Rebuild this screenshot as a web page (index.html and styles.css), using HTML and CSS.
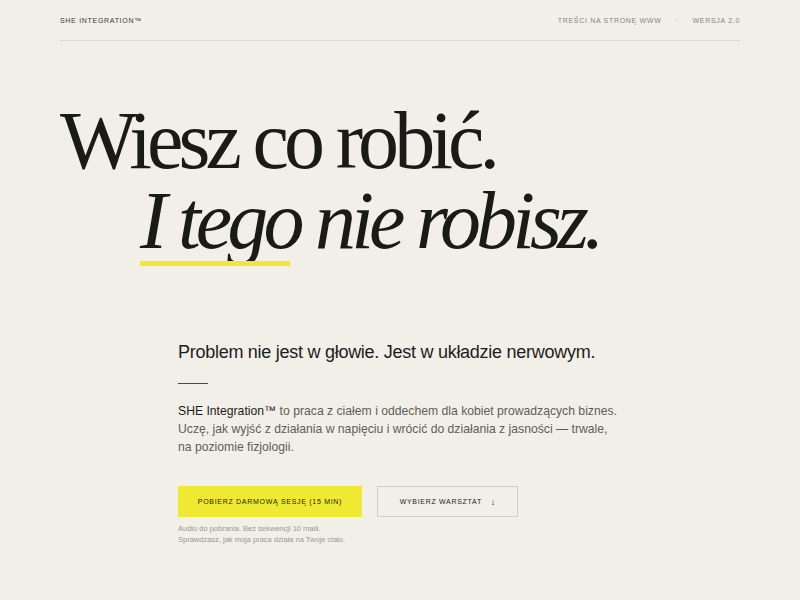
FILE: index.html
```html
<!DOCTYPE html>
<html lang="pl">
<head>
<meta charset="UTF-8" />
<meta name="viewport" content="width=device-width, initial-scale=1" />
<title>SHE Integration™</title>
<link rel="stylesheet" href="styles.css">
</head>
<body>
  <div class="page">
    <header class="topbar">
      <span class="brand">SHE Integration™</span>
      <nav class="meta">
        <span>Treści na stronę www</span>
        <span class="dot">·</span>
        <span>Wersja 2.0</span>
      </nav>
    </header>

    <h1 class="headline">
      <span class="line">Wiesz co robić.</span>
      <span class="line second"><em><span class="mark">I tego</span> nie robisz.</em></span>
    </h1>

    <section class="intro">
      <p class="lead">Problem nie jest w głowie. Jest w układzie nerwowym.</p>
      <hr class="rule" />
      <p class="text"><strong>SHE Integration™</strong> to praca z ciałem i oddechem dla kobiet prowadzących biznes. Uczę, jak wyjść z działania w napięciu i wrócić do działania z jasności — trwale, na poziomie fizjologii.</p>

      <div class="actions">
        <a class="btn primary" href="#">Pobierz darmową sesję (15 min)</a>
        <a class="btn outline" href="#">Wybierz warsztat <span class="arrow">↓</span></a>
      </div>
      <p class="note">Audio do pobrania. Bez sekwencji 10 maili.<br>Sprawdzasz, jak moja praca działa na Twoje ciało.</p>
    </section>
  </div>
</body>
</html>
```

FILE: styles.css
```css
* {
  box-sizing: border-box;
}
html, body {
  margin: 0;
  background: #f2efe8;
}
body {
  font-family: "Liberation Sans", Arial, sans-serif;
  color: #1c1c1a;
}
.page {
  padding: 0 60px;
}
.topbar {
  display: flex;
  justify-content: space-between;
  align-items: center;
  height: 41px;
  border-bottom: 1px solid #dedad2;
  font-size: 7px;
  letter-spacing: 0.1em;
  text-transform: uppercase;
}
.brand {
  color: #3a3936;
}
.meta {
  display: flex;
  gap: 14px;
  color: #86847f;
}
.headline {
  margin: 60px 0 0;
  font-family: "Liberation Serif", "Times New Roman", serif;
  font-weight: normal;
  font-size: 82px;
  line-height: 80px;
  letter-spacing: -0.06em;
  color: #1a1a17;
}
.line {
  display: block;
}
.second {
  padding-left: 80px;
}
.mark {
  display: inline-block;
  position: relative;
}
.mark::after {
  content: "";
  position: absolute;
  left: 0;
  right: 9px;
  bottom: -5px;
  height: 5px;
  background: #efe73a;
}
.intro {
  margin: 81px 0 0 118px;
  width: 440px;
}
.lead {
  margin: 0;
  font-size: 18px;
  letter-spacing: -0.015em;
  color: #1d1d1b;
}
.rule {
  width: 30px;
  margin: 20px 0 18px;
  border: 0;
  border-top: 1px solid #4a4945;
}
.text {
  margin: 0;
  font-size: 12.2px;
  line-height: 18px;
  color: #5f5d58;
}
.text strong {
  font-weight: normal;
  color: #1d1d1b;
}
.actions {
  display: flex;
  gap: 15px;
  margin-top: 30px;
}
.btn {
  display: flex;
  align-items: center;
  justify-content: center;
  height: 31px;
  font-size: 7px;
  letter-spacing: 0.1em;
  text-transform: uppercase;
  text-decoration: none;
  color: #22221f;
}
.primary {
  width: 184px;
  background: #f0e934;
}
.outline {
  width: 141px;
  border: 1px solid #d2cec6;
  gap: 9px;
}
.arrow {
  letter-spacing: 0;
  font-size: 9px;
}
.note {
  margin: 6px 0 0;
  font-size: 7.5px;
  line-height: 11px;
  color: #9a9791;
}
```
